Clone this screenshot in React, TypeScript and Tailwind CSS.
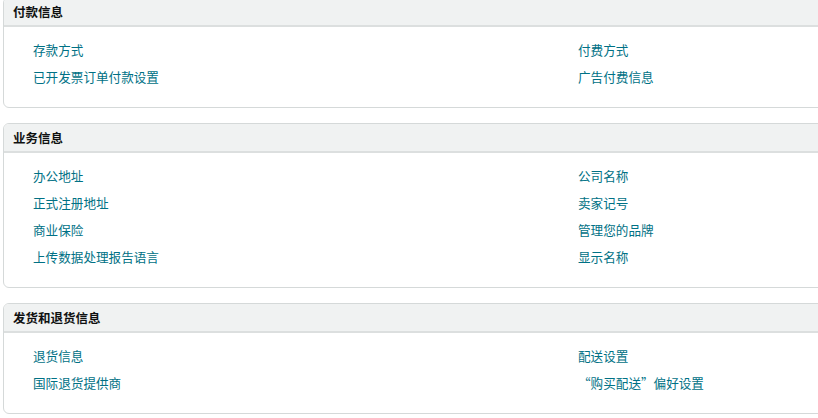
import React from 'react';

type Section = {
  title: string;
  left: string[];
  right: string[];
};

const sections: Section[] = [
  {
    title: '付款信息',
    left: ['存款方式', '已开发票订单付款设置'],
    right: ['付费方式', '广告付费信息'],
  },
  {
    title: '业务信息',
    left: ['办公地址', '正式注册地址', '商业保险', '上传数据处理报告语言'],
    right: ['公司名称', '卖家记号', '管理您的品牌', '显示名称'],
  },
  {
    title: '发货和退货信息',
    left: ['退货信息', '国际退货提供商'],
    right: ['配送设置', '“购买配送”偏好设置'],
  },
];

const LinkList: React.FC<{ items: string[] }> = ({ items }) => (
  <ul className="flex flex-col">
    {items.map((item) => (
      <li key={item} className="h-[27px] flex items-center">
        <a href="#" className="text-[12.6px] leading-none text-[#007185] hover:underline">
          {item}
        </a>
      </li>
    ))}
  </ul>
);

const SettingsCard: React.FC<{ section: Section }> = ({ section }) => (
  <div className="w-[840px] rounded-md border border-[#d5d9d9] bg-white overflow-hidden">
    {/* Card header */}
    <div className="h-[29px] flex items-center px-[9px] bg-[#f0f2f2] border-b-2 border-[#dcdfdf]">
      <h2 className="text-[12.5px] leading-none font-bold text-[#0f1111] pt-px">{section.title}</h2>
    </div>
    {/* Link columns */}
    <div className="grid grid-cols-[545px_1fr] pl-[29px] pt-[10px] pb-[16px]">
      <LinkList items={section.left} />
      <LinkList items={section.right} />
    </div>
  </div>
);

export default function App() {
  return (
    <div
      className="w-[818px] h-[418px] overflow-hidden bg-white"
      style={{ fontFamily: '"Noto Sans CJK SC", "Noto Sans", sans-serif' }}
    >
      <div className="flex flex-col gap-[15px] pl-[3px] -mt-[3px]">
        {sections.map((s) => (
          <SettingsCard key={s.title} section={s} />
        ))}
      </div>
    </div>
  );
}
